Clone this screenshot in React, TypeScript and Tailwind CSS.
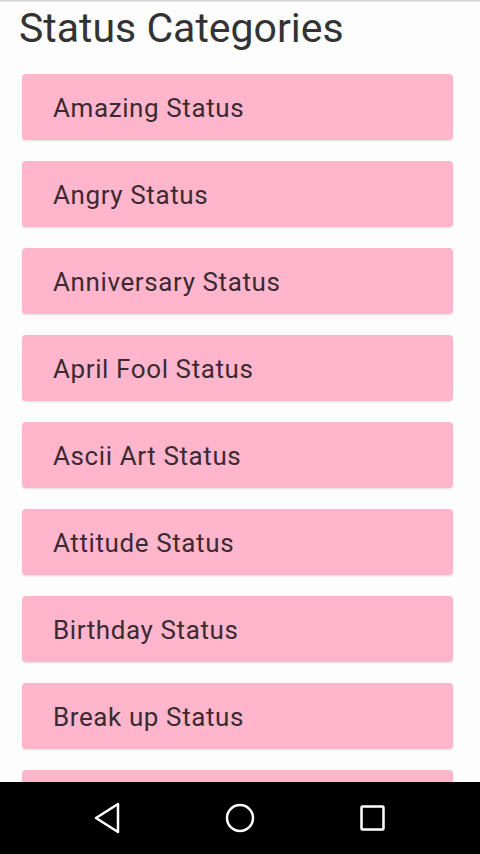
import React from "react";

const items = [
  "Amazing Status",
  "Angry Status",
  "Anniversary Status",
  "April Fool Status",
  "Ascii Art Status",
  "Attitude Status",
  "Birthday Status",
  "Break up Status",
  "Breaking Status",
];

export default function App() {
  return (
    <div className="w-[480px] h-[854px] bg-white flex flex-col overflow-hidden" style={{ fontFamily: "Roboto, 'Liberation Sans', sans-serif" }}>
      <div className="h-[2px] bg-gradient-to-b from-[#c8c8c8] to-[#f4f4f4]" />
      <div className="flex-1 overflow-hidden bg-[#fdfdfd]">
        <div className="pl-[19px] pt-[2px] h-[72px] text-[41px] leading-[48px] text-[#333333]">Status Categories</div>
        <div className="flex flex-col gap-[21px]">
          {items.map((t) => (
            <div key={t} className="ml-[22px] w-[431px] h-[66px] shrink-0 rounded-[4px] bg-[#ffb6cd] shadow-[0_1px_2px_rgba(0,0,0,0.12)] flex items-center pl-[31px] pt-[2px] text-[26px] tracking-[0.6px] text-[#3b2a31]">
              {t}
            </div>
          ))}
        </div>
      </div>
      <div className="h-[72px] bg-black flex items-center justify-center gap-[85px] shrink-0">
        <svg width="48" height="48" viewBox="0 0 48 48">
          <path d="M35 10 L13 24 L35 38 Z" fill="none" stroke="white" strokeWidth="2.5" strokeLinejoin="round" />
        </svg>
        <svg width="48" height="48" viewBox="0 0 48 48">
          <circle cx="24" cy="24" r="13" fill="none" stroke="white" strokeWidth="2.5" />
        </svg>
        <svg width="48" height="48" viewBox="0 0 48 48">
          <rect x="12.5" y="12.5" width="22" height="23" rx="1" fill="none" stroke="white" strokeWidth="2.5" />
        </svg>
      </div>
    </div>
  );
}
